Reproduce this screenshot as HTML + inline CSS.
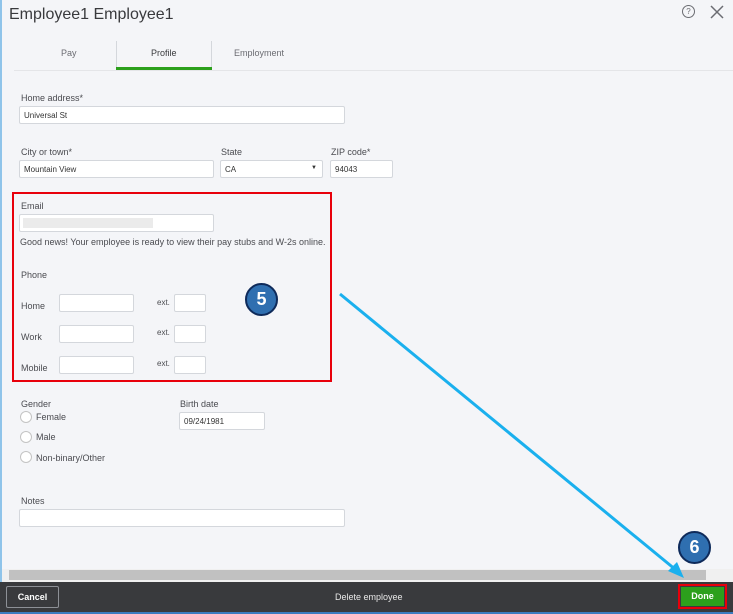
<!DOCTYPE html>
<html><head><style>
*{box-sizing:border-box;margin:0;padding:0}
body{width:733px;height:614px;overflow:hidden;background:#f4f5f8;font-family:"Liberation Sans",sans-serif;color:#393a3d;position:relative}
.a{position:absolute}
.lbl{position:absolute;font-size:9px;color:#4a4b50}
.in{position:absolute;background:#fff;border:1px solid #d4d7dc;border-radius:2px;height:18px;font-size:8px;padding:4px 4px;color:#333}
.rad{position:absolute;width:12px;height:12px;border:1px solid #c4c4c4;border-radius:50%;background:#fff}
.circ{position:absolute;width:33px;height:33px;border-radius:50%;background:#2f6fb0;border:2px solid #0e2a5a;color:#fff;font-weight:bold;font-size:18px;text-align:center;line-height:29px}
</style></head><body>
<div class="a" style="left:0;top:0;width:2px;height:612px;background:#8fc4ea"></div>
<div class="a" style="left:9px;top:6px;font-size:16px;color:#393a3d">Employee1 Employee1</div>
<div class="a" style="left:682px;top:5px;width:13px;height:13px;border:1px solid #6b6c72;border-radius:50%;font-size:8px;text-align:center;line-height:11px;color:#6b6c72">?</div>
<svg class="a" style="left:710px;top:5px" width="14" height="14"><path d="M1 1L13 13M13 1L1 13" stroke="#6b6c72" stroke-width="1.5"/></svg>
<div class="a" style="left:14px;top:70px;width:719px;height:1px;background:#e4e5e8"></div>
<div class="a" style="left:61px;top:48px;font-size:9px;color:#6b6c72">Pay</div>
<div class="a" style="left:116px;top:41px;width:1px;height:28px;background:#d4d7dc"></div>
<div class="a" style="left:211px;top:41px;width:1px;height:28px;background:#d4d7dc"></div>
<div class="a" style="left:151px;top:48px;font-size:9px;color:#393a3d">Profile</div>
<div class="a" style="left:116px;top:67px;width:96px;height:3px;background:#2ca01c"></div>
<div class="a" style="left:234px;top:48px;font-size:9px;color:#6b6c72">Employment</div>

<div class="lbl" style="left:21px;top:93px">Home address*</div>
<div class="in" style="left:19px;top:106px;width:326px">Universal St</div>
<div class="lbl" style="left:21px;top:147px">City or town*</div>
<div class="in" style="left:19px;top:160px;width:195px">Mountain View</div>
<div class="lbl" style="left:221px;top:147px">State</div>
<div class="in" style="left:220px;top:160px;width:103px">CA<span style="position:absolute;right:5px;top:4px;font-size:6px">▼</span></div>
<div class="lbl" style="left:331px;top:147px">ZIP code*</div>
<div class="in" style="left:330px;top:160px;width:63px">94043</div>

<div class="a" style="left:12px;top:192px;width:320px;height:190px;border:2px solid #e8000b"></div>
<div class="lbl" style="left:21px;top:201px">Email</div>
<div class="in" style="left:19px;top:214px;width:195px"><div style="position:absolute;left:3px;top:3px;width:130px;height:10px;background:#ebebeb"></div></div>
<div class="lbl" style="left:20px;top:237px">Good news! Your employee is ready to view their pay stubs and W-2s online.</div>
<div class="lbl" style="left:21px;top:270px">Phone</div>
<div class="lbl" style="left:21px;top:301px">Home</div>
<div class="in" style="left:59px;top:294px;width:75px"></div>
<div class="lbl" style="left:157px;top:298px;font-size:8px">ext.</div>
<div class="in" style="left:174px;top:294px;width:32px"></div>
<div class="lbl" style="left:21px;top:332px">Work</div>
<div class="in" style="left:59px;top:325px;width:75px"></div>
<div class="lbl" style="left:157px;top:328px;font-size:8px">ext.</div>
<div class="in" style="left:174px;top:325px;width:32px"></div>
<div class="lbl" style="left:21px;top:363px">Mobile</div>
<div class="in" style="left:59px;top:356px;width:75px"></div>
<div class="lbl" style="left:157px;top:359px;font-size:8px">ext.</div>
<div class="in" style="left:174px;top:356px;width:32px"></div>

<div class="lbl" style="left:21px;top:399px">Gender</div>
<div class="rad" style="left:20px;top:411px"></div><div class="lbl" style="left:36px;top:412px">Female</div>
<div class="rad" style="left:20px;top:431px"></div><div class="lbl" style="left:36px;top:432px">Male</div>
<div class="rad" style="left:20px;top:451px"></div><div class="lbl" style="left:36px;top:453px">Non-binary/Other</div>
<div class="lbl" style="left:180px;top:399px">Birth date</div>
<div class="in" style="left:179px;top:412px;width:86px">09/24/1981</div>

<div class="lbl" style="left:21px;top:496px">Notes</div>
<div class="in" style="left:19px;top:509px;width:326px"></div>

<div class="a" style="left:2px;top:569px;width:731px;height:13px;background:#f0f0f0"></div>
<div class="a" style="left:9px;top:570px;width:697px;height:10px;background:#c1c1c1"></div>
<div class="a" style="left:0;top:582px;width:733px;height:30px;background:#393a3d"></div>
<div class="a" style="left:0;top:612px;width:733px;height:2px;background:#3a7bbf"></div>
<div class="a" style="left:6px;top:586px;width:53px;height:22px;border:1px solid #8d9096;border-radius:2px;color:#fff;font-size:9px;font-weight:bold;text-align:center;line-height:20px">Cancel</div>
<div class="a" style="left:335px;top:592px;color:#e8e8e8;font-size:9px">Delete employee</div>
<div class="a" style="left:678px;top:584px;width:49px;height:25px;border:2px solid #e8000b"></div>
<div class="a" style="left:681px;top:587px;width:43px;height:19px;background:#2ca01c;color:#fff;font-size:9px;font-weight:bold;text-align:center;line-height:19px">Done</div>

<svg class="a" style="left:0;top:0" width="733" height="614"><line x1="340" y1="294" x2="676" y2="570" stroke="#1ab0ee" stroke-width="3"/><path d="M684 578L668 571L677 562Z" fill="#1ab0ee"/></svg>
<div class="circ" style="left:245px;top:283px">5</div>
<div class="circ" style="left:678px;top:531px">6</div>
</body></html>
